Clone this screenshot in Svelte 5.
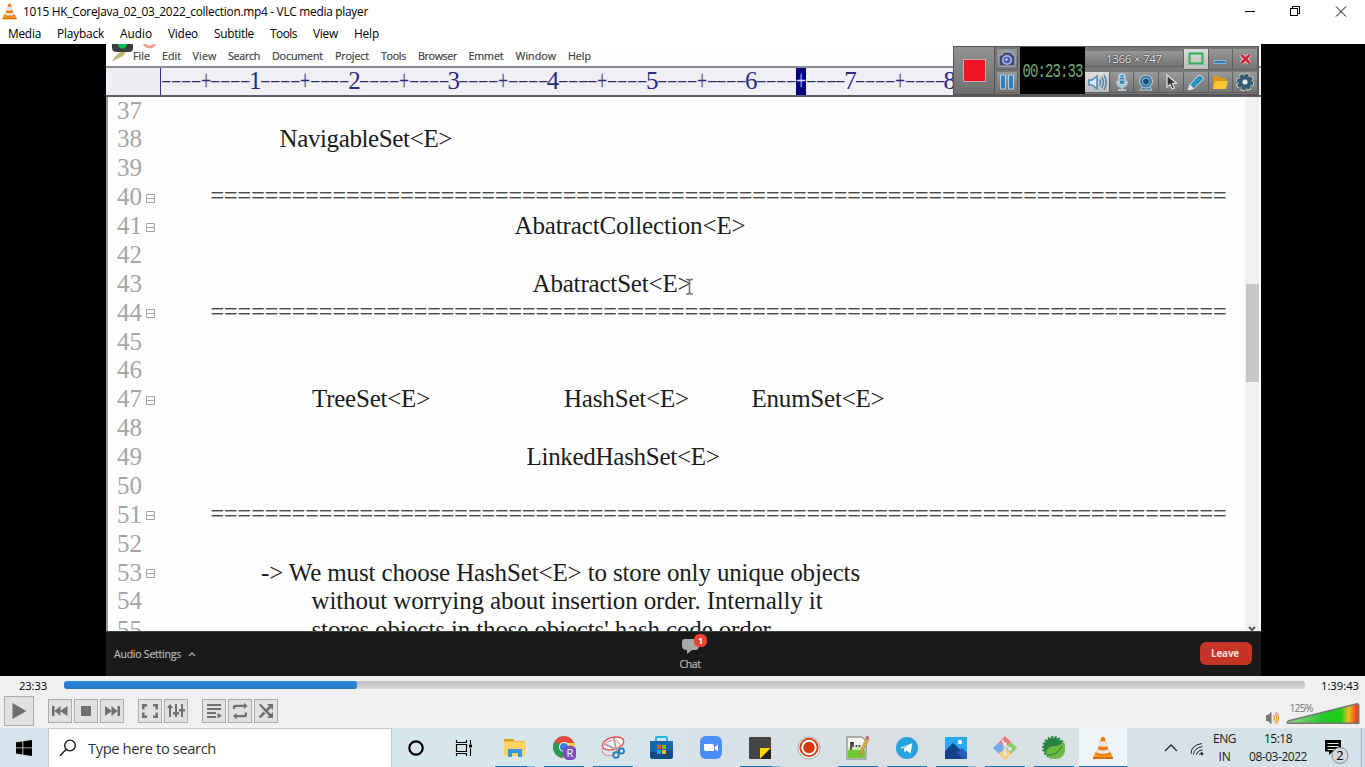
<script>
  // Spreads the letters of a label so that it fills the given width.
  function fit(node, width) {
    const natural = node.getBoundingClientRect().width;
    const count = [...node.textContent].length;
    node.style.letterSpacing = `${(width - natural) / count}px`;
  }

  const menus = [
    ['Media', 33, 16], ['Playback', 47, 16], ['Audio', 32, 16], ['Video', 30, 16],
    ['Subtitle', 40, 16], ['Tools', 27, 16], ['View', 25, 16], ['Help', 25, 0],
  ];
  const editorMenus = [
    ['File', 17, 12], ['Edit', 19, 11.5], ['View', 24, 11.5], ['Search', 32, 12], ['Document', 51, 12],
    ['Project', 34, 12], ['Tools', 25, 12], ['Browser', 39, 11.5], ['Emmet', 35, 12], ['Window', 40.5, 12], ['Help', 23, 0],
  ];
  const ruler = Array.from({ length: 80 }, (_, i) => {
    const n = i + 1;
    return n % 10 === 0 ? String(n / 10) : n % 5 === 0 ? '+' : '-';
  });
  const bar = '='.repeat(75);
  // line number, fold mark, [left edge, width, text] pieces
  const lines = [
    [37, false, []],
    [38, false, [[279.5, 172.5, 'NavigableSet<E>']]],
    [39, false, []],
    [40, true, [[210.5, 1016, bar]]],
    [41, true, [[514.5, 231, 'AbatractCollection<E>']]],
    [42, false, []],
    [43, false, [[532.5, 159, 'AbatractSet<E>']]],
    [44, true, [[210.5, 1016, bar]]],
    [45, false, []],
    [46, false, []],
    [47, true, [[312, 118, 'TreeSet<E>'], [564, 125, 'HashSet<E>'], [751.5, 133, 'EnumSet<E>']]],
    [48, false, []],
    [49, false, [[526.5, 193, 'LinkedHashSet<E>']]],
    [50, false, []],
    [51, true, [[210.5, 1016, bar]]],
    [52, false, []],
    [53, true, [[261, 599, '-> We must choose HashSet<E> to store only unique objects']]],
    [54, false, [[311.5, 511, 'without worrying about insertion order. Internally it']]],
    [55, false, [[311.5, 464, "stores objects in those objects' hash code order."]]],
  ];
  const gap = (pieces, i) => pieces[i][0] - (i ? pieces[i - 1][0] + pieces[i - 1][1] : 161);

  const apps = [
    ['files', 'split'], ['chrome', 'full'], ['snip', 'full'], ['store', ''], ['zoom', ''], ['notes', 'split'],
    ['record', ''], ['notepad', 'full'], ['telegram', 'full'], ['photos', 'split'], ['git', 'full'], ['spring', 'full'], ['vlc', 'active'],
  ];
</script>

{#snippet cone(size)}
  <svg width={size} height={size} viewBox="0 0 24 24">
    <path d="M4.500 15.500h15l2.500 6.500H2z" fill="#fb9a1c" />
    <path d="M2 21h20v2H2z" fill="#d96c00" />
    <path d="M10.300 1.500q1.700-1.500 3.400 0L18.800 18.200c-2.600 2-11 2-13.600 0z" fill="#ee7a12" />
    <path d="M9.200 5.200h5.600l1.500 4.800c-2 1.200-6.600 1.200-8.600 0zM6.700 13.300c3 1.500 7.600 1.500 10.600 0l1 3.200c-3 1.700-9.600 1.700-12.600 0z" fill="#e6e6e6" />
  </svg>
{/snippet}

<div class="screen">
  <header class="title">
    <span class="logo">{@render cone(17)}</span>
    <span class="caption"><span use:fit={345}>1015 HK_CoreJava_02_03_2022_collection.mp4 - VLC media player</span></span>
    <svg class="winbtns" width="110" height="20" viewBox="0 0 110 20" fill="none" stroke="#000" shape-rendering="crispEdges">
      <path d="M5 9.500h10M50.500 6.500h7v7h-7zM52.500 6V4.500h7v7H58" />
      <path d="M96 4.500l10 10M106 4.500l-10 10" shape-rendering="auto" />
    </svg>
  </header>
  <nav class="menu">
    {#each menus as [name, w, after]}
      <span class="cell" style:width="{w}px" style:margin-right="{after}px"><span use:fit={w}>{name}</span></span>
    {/each}
  </nav>

  <main class="video">
    <section class="stage">
      <div class="editor-menu">
        <svg class="leaf" width="50" height="20" viewBox="0 0 50 20">
          <path d="M6 0h21v4q0 4-4 4H11Q6 8 6 4z" fill="#3a3f3d" />
          <path d="M12 0h9q-.500 4.500-4.500 4.500T12 0z" fill="#12bf56" />
          <path d="M6 17.500l4-6 4-3.500h6l-3 4-6 3z" fill="#b9b772" />
          <path d="M38 0q5.500 6 11 0" fill="none" stroke="#f4a090" stroke-width="3" />
        </svg>
        {#each editorMenus as [name, w, after]}
          <span class="cell" style:width="{w}px" style:margin-right="{after}px"><span use:fit={w}>{name}</span></span>
        {/each}
      </div>
      <div class="ruler">
        {#each ruler as mark, i}
          <span class:caret={i === 64}><b class:dash={mark === '-'} class:plus={mark === '+'}>{mark}</b></span>
        {/each}
      </div>
      <div class="document">
        <div class="lines">
          {#each lines as [n, fold, pieces]}
            <div class="line">
              <span class="number">{n}</span>
              <span class="fold">
                {#if fold}
                  <svg width="9" height="9" viewBox="0 0 9 9" fill="none" stroke="#a5a5a5"><path d="M.5.500h8v8h-8zM.5 4.500h8" /></svg>
                {/if}
              </span>
              {#each pieces as [, w, text], i}
                <span class="cell" class:rule={text === bar} style:width="{w}px" style:margin-left="{gap(pieces, i)}px"><span use:fit={w}>{text}</span></span>
              {/each}
            </div>
          {/each}
        </div>
        <div class="scroll">
          <div class="thumb"></div>
          <svg width="10" height="6" viewBox="0 0 10 6"><path d="M2 2l3 3 3-3" fill="none" stroke="#555" stroke-width="2" /></svg>
        </div>
      </div>
      <svg class="ibeam" width="9" height="18" viewBox="0 0 9 18" fill="none" stroke="#777" stroke-width="1.600"><path d="M1 1.500h2.500L4.500 3l1-1.500H8M4.500 3v12M1 16h2.500l1-1.500 1 1.500H8" /></svg>

      <div class="recorder">
        <div class="stop"><i></i></div>
        <div class="pair">
          <div><svg width="20" height="20" viewBox="0 0 20 20"><path d="M2 6h3l2-3h7l2 3h2v11H2z" fill="#3e4b79" stroke="#b5bccb" /><circle cx="10" cy="11" r="5" fill="#a9b4e8" /><circle cx="10" cy="11" r="3.300" fill="#4956a8" /><circle cx="9.500" cy="10.500" r="1.300" fill="#cdd4ff" /></svg></div>
          <div><svg width="20" height="20" viewBox="0 0 20 20"><path d="M3.500 3h5v14h-5zM11.500 3h5v14h-5z" fill="#2f7fc0" stroke="#b9d0e2" /></svg></div>
        </div>
        <div class="timer"><span use:fit={60}>00:23:33</span></div>
        <div class="tools">
          <div class="size"><span use:fit={56}>1366 × 747</span></div>
          <div class="lit"><svg width="20" height="20" viewBox="0 0 20 20"><path d="M3.500 4.500h13v10h-13z" fill="none" stroke="#2db34f" stroke-width="2" /></svg></div>
          <div><svg width="20" height="20" viewBox="0 0 20 20"><path d="M4 11.500h12v3H4z" fill="#2f7fc7" stroke="#b5c4d4" stroke-width=".7" /></svg></div>
          <div><svg width="20" height="20" viewBox="0 0 20 20"><path d="M6.500 6l8 8M14.500 6l-8 8" stroke="#f0d6d6" stroke-width="4.500" /><path d="M6.500 6l8 8M14.500 6l-8 8" stroke="#cb2038" stroke-width="2.600" /></svg></div>
          <div class="lit"><svg width="22" height="20" viewBox="0 0 22 20" fill="none" stroke="#4e88ad" stroke-width="1.500"><path d="M3 8h3l5-4v13l-5-4H3z" fill="#d7eaf4" /><path d="M13.500 7.500q2 3 0 6M15.500 5q4 5 0 10.500M18 3q4.500 7 0 14.500" /></svg></div>
          <div><svg width="20" height="20" viewBox="0 0 20 20" fill="none" stroke="#c4dbe6" stroke-width="1.500"><rect x="7" y="2" width="6" height="11" rx="3" fill="#3e83b0" /><path d="M5 9q0 6 5 6t5-6M10 15v3M6 18h8" /><path d="M8 5h4M8 8h4" stroke-width="1" /></svg></div>
          <div><svg width="20" height="20" viewBox="0 0 20 20"><path d="M4 18q1-4 6-4t6 4z" fill="#3f7ba6" stroke="#c0cfd8" /><circle cx="10" cy="9.500" r="6.500" fill="#3c7daf" stroke="#c0d3df" /><circle cx="10" cy="9.500" r="3.500" fill="#174a75" stroke="#86b7d8" /></svg></div>
          <div><svg width="20" height="20" viewBox="0 0 20 20"><path d="M6 3v12l3-2.500 2 4.500 2.500-1-2-4.500 4-.3z" fill="#333" stroke="#ddd" stroke-width="1.300" /></svg></div>
          <div><svg width="20" height="20" viewBox="0 0 20 20"><path d="M2 18l2-5.500L13 3q3 0 4.500 4L8 16.500z" fill="#288ebd" stroke="#d5e4ea" /><path d="M2 18l2-5.500 4 4z" fill="#e8e2d5" /></svg></div>
          <div><svg width="20" height="20" viewBox="0 0 20 20"><path d="M3 4h5l2 2h6v10H3z" fill="#d9990f" /><path d="M5 9h13l-2 8H3z" fill="#fbc53a" /></svg></div>
          <div><svg width="20" height="20" viewBox="0 0 20 20"><circle cx="10" cy="10" r="7" fill="none" stroke="#c5d2d8" stroke-width="4.500" stroke-dasharray="3.700 1.800" /><circle cx="10" cy="10" r="4.500" fill="none" stroke="#345b70" stroke-width="4" /><circle cx="10" cy="10" r="7" fill="none" stroke="#345b70" stroke-width="2.500" stroke-dasharray="3.200 2.300" /><circle cx="10" cy="10" r="2.500" fill="#e2e9ec" /></svg></div>
        </div>
      </div>
    </section>
    <footer class="meeting">
      <div class="audio"><span use:fit={67}>Audio Settings</span><svg width="8" height="5" viewBox="0 0 8 5"><path d="M1 4l3-3 3 3" fill="none" stroke="#aaa" stroke-width="1.300" /></svg></div>
      <div class="chat">
        <svg width="34" height="24" viewBox="0 0 34 24"><path d="M8 6h11q3 0 3 3v4q0 4-4 4h-3l-5 4v-4q-5 0-5-4V9q0-3 3-3z" fill="#a9a9a9" /><rect x="17" y="1" width="13" height="13" rx="5.500" fill="#f0422f" /><text x="23.500" y="10.700" text-anchor="middle">1</text></svg>
        <span use:fit={21}>Chat</span>
      </div>
      <button class="leave"><span use:fit={28}>Leave</span></button>
    </footer>
  </main>

  <section class="controls">
    <div class="seek">
      <span class="elapsed"><span use:fit={28}>23:33</span></span>
      <div class="track"><div class="played" style:width="{(23 * 60 + 33) / (99 * 60 + 43) * 100}%"></div></div>
      <span class="total"><span use:fit={38}>1:39:43</span></span>
    </div>
    <div class="buttons">
      <div class="btn play"><svg width="28" height="28" viewBox="0 0 28 28"><path d="M7.500 6l14 8-14 8z" /></svg></div>
      <div class="group">
        <div class="btn"><svg viewBox="0 0 22 22"><path d="M3 6h2.500v10H3zM5.500 11l6-5v10zM11 11l7.500-5v10z" /></svg></div>
        <div class="btn"><svg viewBox="0 0 22 22"><path d="M6 6h10v10H6z" /></svg></div>
        <div class="btn"><svg viewBox="0 0 22 22"><path d="M16.500 6H19v10h-2.500zM4 6l7 5-7 5zM10.500 6l6 5-6 5z" /></svg></div>
      </div>
      <div class="group">
        <div class="btn"><svg viewBox="0 0 22 22"><path d="M3 4h5v2.500H5.500v3H3zM14 4h5v5.500h-2.500v-3H14zM3 12.500h2.500v3H8V18H3zM16.500 12.500H19V18h-5v-2.500h2.500z" /></svg></div>
        <div class="btn"><svg viewBox="0 0 22 22"><path d="M4 7h2v10H4zM2 8l3-4 3 4zM10 4h2v13h-2zM8 12h6v2.500H8zM16 4h2v13h-2zM14 9h6v2.500h-6z" /></svg></div>
      </div>
      <div class="group">
        <div class="btn"><svg viewBox="0 0 22 22"><path d="M4 4h14v2H4zM4 8h14v2H4zM4 12h9v2H4zM4 16h9v2H4zM14.500 13l4.500 2.500-4.500 3z" /></svg></div>
        <div class="btn"><svg viewBox="0 0 22 22"><path d="M4 9V7q0-2.200 2.200-2.200H15V2.500L18.500 6 15 9V7H6.300v2zM18 12.500V15q0 2.200-2.200 2.200H7.500v2.300L4 16l3.500-3V15h8.200v-2.500z" /></svg></div>
        <div class="btn"><svg viewBox="0 0 22 22"><path d="M4 5l1.500-1.500 10.500 10.500L18 12v6h-6l2-2zM12 4h6v6l-2-2-3 3-2-2 3-3zM8.500 11.500l2 2L5.500 18.300 3.700 16.500z" /></svg></div>
      </div>
      <div class="volume">
        <svg width="96" height="28" viewBox="0 0 96 28">
          <defs><linearGradient id="vol"><stop offset="0" stop-color="#a1d69b" /><stop offset=".5" stop-color="#25c82a" /><stop offset=".75" stop-color="#1bd014" /><stop offset=".86" stop-color="#eebc24" /><stop offset=".97" stop-color="#f04422" /></linearGradient></defs>
          <path d="M1 18h2l3.500-3.500v13L3 24H1z" fill="#777" />
          <path d="M8.300 18.500q2.300 2.500 0 5M9.800 16.500q4 4.500 0 9M11.200 14.800q5 6 0 12.400" fill="none" stroke="#f49a31" stroke-width="1.300" />
          <path d="M22.500 26.300Q21.500 24 25 23.500L92 6.700q1.700 0 1.700 1.300V26.300z" fill="url(#vol)" stroke="#777" stroke-width="1.500" />
          <text x="24.500" y="15" textLength="24">125%</text>
        </svg>
      </div>
    </div>
  </section>

  <footer class="taskbar">
    <div class="start"><svg width="16" height="16" viewBox="0 0 16 16"><path d="M0 2.300l6.500-.9v6.100H0zM7.300 1.300L16 0v7.500H7.300zM0 8.300h6.500v6.200L0 13.600zM7.300 8.300H16V16l-8.700-1.300z" /></svg></div>
    <div class="search">
      <svg width="18" height="18" viewBox="0 0 18 18" fill="none" stroke="#111" stroke-width="1.300"><circle cx="11" cy="6.500" r="5.300" /><path d="M7.300 10.300L1 16.700" /></svg>
      <span use:fit={128}>Type here to search</span>
    </div>
    <div class="tb"><svg width="18" height="18" viewBox="0 0 18 18"><circle cx="9" cy="9" r="6.700" fill="none" stroke="#000" stroke-width="2.200" /></svg></div>
    <div class="tb"><svg width="18" height="18" viewBox="0 0 18 18" fill="none" stroke="#000" stroke-width="1.200"><path d="M1.500 1v2.500h10V1M1.500 5.500h10v7h-10zM1.500 17v-2.500h10V17M15.500 1v4M15.500 9.500V17" /><path d="M14 5.500h3v3h-3z" fill="#000" stroke="none" /></svg></div>
    <div class="apps">
      {#each apps as [name, state]}
        <div class="app {state}">
          {#if name === 'vlc'}
            {@render cone(24)}
          {:else}
            <svg width="24" height="24" viewBox="0 0 24 24">
              {#if name === 'files'}
                <path d="M1 3h9l2 2h10v3H1z" fill="#dfa116" /><path d="M1 5.500h21.500V20H1z" fill="#fdd264" /><path d="M5 21v-8h14v8h-4v-4H9v4z" fill="#3796df" />
              {:else if name === 'chrome'}
                <circle cx="12" cy="11" r="11" fill="#e14b3f" /><path d="M12 11L2.500 5.500A11 11 0 0 0 10 21.900L14 16z" fill="#2a9b50" /><path d="M12 7h10.300A11 11 0 0 1 11 22l5-9z" fill="#fbcf3d" /><circle cx="12" cy="11" r="5" fill="#fff" /><circle cx="12" cy="11" r="4" fill="#3e7de0" /><circle cx="18" cy="17" r="7.500" fill="#7b50bd" /><text x="18" y="21" text-anchor="middle" class="avatar">R</text>
              {:else if name === 'snip'}
                <ellipse cx="12" cy="7.500" rx="11" ry="6" transform="rotate(-15 12 7.500)" fill="#fff" stroke="#e64c4c" stroke-width="1.300" /><ellipse cx="10" cy="12" rx="9.500" ry="7" transform="rotate(-30 10 12)" fill="none" stroke="#ee8585" /><path d="M13 2l2 12M4 8l14 7" stroke="#a5a8ad" stroke-width="2" /><circle cx="15" cy="19" r="2.800" fill="none" stroke="#227dbb" stroke-width="1.800" /><circle cx="20.500" cy="15" r="2.600" fill="none" stroke="#227dbb" stroke-width="1.800" />
              {:else if name === 'store'}
                <path d="M6 6V2q0-1 1-1h9q1 0 1 1v4" fill="none" stroke="#28b6e9" stroke-width="2" /><path d="M0 5h23v15q0 3-3 3H3q-3 0-3-3z" fill="#1267b2" /><path d="M0 16l23-2v6q0 3-3 3H3q-3 0-3-3z" fill="#124c87" /><path d="M7 9h4v4H7z" fill="#f04e2b" /><path d="M12 9h4v4h-4z" fill="#7ab928" /><path d="M7 14h4v4H7z" fill="#22a5e8" /><path d="M12 14h4v4h-4z" fill="#fab91a" />
              {:else if name === 'zoom'}
                <rect x="1" y="0" width="22" height="23" rx="6" fill="#4b8dfb" /><path d="M5 8h8q2 0 2 2v5H7q-2 0-2-2zM15.800 11l3.200-2.500v7l-3.200-2.500z" fill="#fff" />
              {:else if name === 'notes'}
                <rect x="1" y="1" width="22" height="22" rx="1" fill="#444" /><path d="M12 12h11L12 23z" fill="#ffd900" /><path d="M23 12v11H12z" fill="#222" />
              {:else if name === 'record'}
                <circle cx="12" cy="12" r="11" fill="#fff" stroke="#777" stroke-width=".6" /><circle cx="12" cy="11.500" r="8.700" fill="none" stroke="#cc441d" stroke-width="2" /><circle cx="12" cy="11.500" r="5.700" fill="#d5360a" />
              {:else if name === 'notepad'}
                <path d="M1 1h15l4 4v18H1z" fill="#f1f5ed" stroke="#777" /><path d="M2 14h17v8H2z" fill="#71c832" /><path d="M2 11h17v3H2z" fill="#cdeab3" /><path d="M5 6v8M5 6.700h2V11M9.500 10h2M12.500 10h2" stroke="#222" stroke-width="1.500" fill="none" /><path d="M20.500 1L14 16l-1 4 3-3 7-14z" fill="#e8ab35" stroke="#9b7650" stroke-width=".6" /><path d="M20 1l2.500 1.300" stroke="#c76467" stroke-width="3" />
              {:else if name === 'telegram'}
                <circle cx="12" cy="12" r="11" fill="#28a1dc" /><path d="M5 12l12.500-5-2 10.500-4-3-2 2-.5-4 5-4-6.500 4z" fill="#fff" />
              {:else if name === 'photos'}
                <path d="M1 1h22v22H1z" fill="#28a8ed" /><path d="M1 15l8-8 14 13v3H1z" fill="#16428a" /><path d="M13 17l5-5 5 5v6h-4z" fill="#2462ba" /><circle cx="16" cy="6" r="2.200" fill="#fff" />
              {:else if name === 'git'}
                <path d="M12 0l6 6-6 6-6-6z" fill="#f07679" /><path d="M6 6l6 6-6 6-6-6z" fill="#78aaed" /><path d="M18 6l6 6-6 6-6-6z" fill="#8bcd69" /><path d="M12 12l6 6-6 6-6-6z" fill="#f8cf6b" /><path d="M9 4l3 5v10M12 9l5 4" stroke="#ddd" stroke-width="2.200" fill="none" /><circle cx="12" cy="8" r="2" fill="#e6e6e6" /><circle cx="12" cy="18" r="2" fill="#e6e6e6" /><circle cx="17" cy="13" r="2" fill="#e6e6e6" />
              {:else}
                <circle cx="11.500" cy="11.500" r="10" fill="#27833f" /><circle cx="11.500" cy="11.500" r="10.500" fill="none" stroke="#27833f" stroke-width="2" stroke-dasharray="2 1.600" /><path d="M21.500 5q5.500 17-8 18-11 0-9-8 2-5 8-5 6 0 9-5z" fill="#69bb41" /><path d="M5 19q10 1 15-9" fill="none" stroke="#277c38" />
              {/if}
            </svg>
          {/if}
        </div>
      {/each}
    </div>
    <div class="tray">
      <svg class="up" width="14" height="8" viewBox="0 0 14 8"><path d="M1 7l6-6 6 6" fill="none" stroke="#222" stroke-width="1.300" /></svg>
      <svg class="wifi" width="14" height="14" viewBox="0 0 14 14" fill="none" stroke="#222"><path d="M1 12Q1 3 12 1.500M3.500 12.500Q4 6 12.500 4.500M6.500 12.800q.5-4 6-5M9.500 13q.2-2 3-2.600" /><circle cx="12" cy="12" r="1.300" fill="#222" stroke="none" /></svg>
      <div class="stack lang"><span use:fit={23}>ENG</span><span use:fit={12}>IN</span></div>
      <div class="stack clock"><span use:fit={28}>15:18</span><span use:fit={58}>08-03-2022</span></div>
      <svg class="notice" width="26" height="26" viewBox="0 0 26 26"><path d="M1 1h16v11.500H9l-4 3.500v-3.500H1z" /><path d="M3.500 4.500h11M3.500 7.500h11M3.500 10.500h7" stroke="#dbe7ed" stroke-width="1.200" /><circle cx="16" cy="16.500" r="8" fill="#d3d8da" stroke="#888" /><text x="16" y="21" text-anchor="middle">2</text></svg>
      <i class="peek"></i>
    </div>
  </footer>
</div>

<style>
  :global(body) { overflow: hidden; }
  .screen { width: 1365px; height: 767px; display: flex; flex-direction: column; overflow: hidden; background: #fff; color: #000; font: 12px "Open Sans", "Noto Sans", sans-serif; }
  svg { display: block; flex: none; }
  .cell { display: block; flex: none; white-space: pre; }
  .title, .menu { display: flex; align-items: center; flex: none; white-space: pre; font-size: 11.900px; }
  .title { height: 23px; }
  .caption { margin-top: -2px; }
  .menu { height: 21px; box-sizing: border-box; padding: 0 0 2px 8px; }
  .logo { margin-left: 1px; width: 22px; }
  .caption { flex: 1; }
  .winbtns { margin-right: 15px; }

  .video { height: 632px; flex: none; background: #000; padding: 0 104px 0 106px; }
  .stage { position: relative; height: 587px; background: #fefefe; overflow: hidden; }
  .editor-menu { height: 22px; box-sizing: border-box; padding: 2px 0 0 27px; display: flex; align-items: center; font-size: 10.700px; color: #3a3a3a; white-space: pre; -webkit-text-stroke: .2px #444; }
  .leaf { position: absolute; left: 0; top: 0; }
  .ruler { height: 31px; box-sizing: border-box; padding-left: 55px; display: flex; overflow: hidden; background: linear-gradient(90deg, #efeef3 54px, #33338a 54px, #33338a 55px, #f0eff4 55px); border-top: 2px solid #8d8d92; border-bottom: 2px solid #5f5d62; font: 25px/26px "Liberation Serif", serif; color: #2b2b80; }
  .ruler span { width: 9.935px; flex: none; display: flex; justify-content: center; }
  .ruler b { font-weight: 400; }
  .ruler .dash { transform: translateY(-1px) scale(1.300, .75); }
  .ruler .plus { transform: translateY(-1px) scale(.72, 1.200); }
  .ruler .caret { background: #00007c; color: #d9d9f5; }
  .document { height: 534px; display: flex; border-left: 2px solid #999; padding-right: 2px; box-sizing: border-box; overflow: hidden; }
  .lines { flex: 1; margin-top: -.4px; font: 25px/28.880px "Liberation Serif", serif; color: #1b1b1b; }
  .line { height: 28.880px; display: flex; padding-left: 9px; }
  .number { width: 29px; color: #a5a5a5; }
  .fold { width: 15px; padding-top: 10.400px; }
  .rule { color: #4a4a4a; font-size: 24px; margin-top: -2px; height: 28px; -webkit-text-stroke: .2px #4a4a4a; }
  .scroll { width: 14px; background: #f0eff1; display: flex; flex-direction: column; align-items: center; justify-content: space-between; }
  .thumb { width: 13px; height: 98px; margin-top: 187px; background: #c7c7c9; }
  .ibeam { position: absolute; left: 579px; top: 234px; }

  .recorder { position: absolute; left: 847px; top: 2px; width: 306px; height: 50px; box-sizing: border-box; border: 1px solid #555; border-bottom-width: 2px; display: grid; grid-template-columns: 41px 25px 65px 1fr; background: #777; }
  .recorder div { display: flex; align-items: center; justify-content: center; }
  .recorder .stop { background: linear-gradient(#929292, #6f6f6f); border-right: 1px solid #555; }
  .stop i { width: 21px; height: 21px; background: #ee1424; outline: 1px solid #d0a8a8; }
  .recorder .pair { display: grid; grid-template-rows: 24px 1fr; }
  .pair div, .tools div { background: linear-gradient(#999, #747474); border-right: 1px solid #606060; border-bottom: 1px solid #606060; overflow: hidden; }
  .recorder .timer { background: #000; color: #72aa7c; font: 14px "Liberation Mono", monospace; white-space: pre; }
  .timer span { transform: scaleY(1.500); }
  .recorder .tools { display: grid; grid-template-columns: repeat(7, 1fr); grid-template-rows: 24px 1fr; }
  .tools .size { grid-column: span 4; color: #eee; font-size: 11.500px; text-shadow: 0 0 2px #222, 0 0 1px #222; white-space: pre; }
  .recorder .lit { background: linear-gradient(#ddd, #bbb); }

  .meeting { height: 45px; background: #1a1a1a; border-top: 1px solid #394239; box-sizing: border-box; display: grid; grid-template-columns: 1fr 40px 1fr; align-items: center; color: #b8b8b8; font-size: 10.500px; white-space: pre; padding: 0 9px 0 8px; -webkit-text-stroke: .2px #b8b8b8; }
  .audio { display: flex; align-items: center; gap: 7px; }
  .chat { display: flex; flex-direction: column; align-items: center; line-height: 14px; height: 44px; padding-left: 14px; }
  .chat svg { margin: 1px 0 0 7px; -webkit-text-stroke: 0; }
  .chat text { font: 700 9px "Open Sans", sans-serif; fill: #fff; }
  .leave { justify-self: end; width: 52px; height: 23px; margin-top: -1px; border: 0; border-radius: 6px; padding: 0 2px 2px 0; background: #c53424; color: #f5dcd9; font: 700 10px "Open Sans", sans-serif; -webkit-text-stroke: 0; }

  .controls { height: 52px; flex: none; background: #f0f0f0; }
  .seek { height: 20px; box-sizing: border-box; padding-bottom: 2px; display: flex; align-items: center; font-size: 11.300px; }
  .elapsed { width: 45px; padding-left: 19px; }
  .track { width: 1241px; height: 8px; border-radius: 3px; background: linear-gradient(#bdbdbd, #d8d8d8); }
  .played { height: 8px; border-radius: 3px; background: linear-gradient(#2c86d9, #2477c8); }
  .total { margin-left: 16px; white-space: pre; }
  .buttons { display: flex; align-items: center; height: 30px; padding-left: 4px; }
  .btn { box-sizing: border-box; width: 24px; height: 24px; border: 1px solid #adadad; background: #e1e1e1; fill: #707070; }
  .btn.play { width: 30px; height: 30px; }
  .group { display: flex; gap: 2px; margin-left: 14px; }
  .volume { margin-left: auto; margin-right: 4px; }
  .volume text { font: 10.500px "Open Sans", sans-serif; fill: #777; }

  .taskbar { height: 39px; flex: none; display: flex; background: linear-gradient(90deg, #d4e5ed, #d5e6ec 40%, #d9dfe2 65%, #d8e2e6 80%, #d3e2ea); }
  .start { width: 48px; display: flex; align-items: center; justify-content: center; }
  .search { width: 344px; box-sizing: border-box; border: 1px solid #c4c9cc; border-bottom: 0; background: #fff; display: flex; align-items: center; font-size: 14.700px; color: #333; padding-left: 10px; gap: 11px; white-space: pre; }
  .tb { width: 48px; display: flex; align-items: center; justify-content: center; }
  .apps { display: flex; gap: 1px; margin-left: 3px; }
  .app { width: 48px; display: flex; align-items: center; justify-content: center; }
  .full { background: linear-gradient(#0078d4, #0078d4) 4px 100% / 40px 1px no-repeat; }
  .split { background: linear-gradient(90deg, #0078d4 32px, #7ab6e6 32px) 4px 100% / 40px 1px no-repeat; }
  .active { background: linear-gradient(#0078d4, #0078d4) 0 100% / 48px 1px no-repeat, #eff4f6; }
  .avatar { font: 11px "Open Sans", sans-serif; fill: #fff; }
  .tray { flex: 1; display: flex; align-items: center; color: #1a1a1a; }
  .up { margin-left: 37px; }
  .wifi { margin-left: 12px; margin-top: 3px; }
  .stack { display: flex; flex-direction: column; align-items: center; font-size: 12px; line-height: 17.500px; white-space: pre; }
  .lang { width: 23px; margin-left: 9px; }
  .clock { width: 58px; margin-left: 13px; }
  .notice { margin-left: 17px; margin-top: 9px; }
  .notice text { font: 13px "Open Sans", sans-serif; }
  .peek { width: 1px; height: 39px; background: #a9b6bc; margin-left: auto; margin-right: 3px; }
</style>
